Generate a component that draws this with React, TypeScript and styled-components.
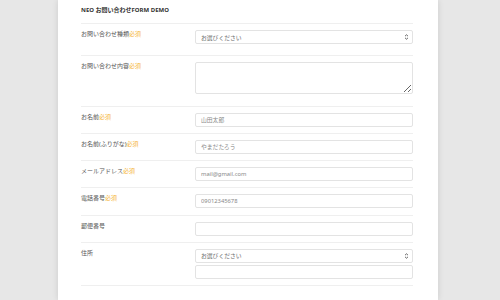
import styled, { createGlobalStyle } from "styled-components";

const GlobalStyle = createGlobalStyle`
  html, body {
    margin: 0;
    padding: 0;
    background: #e7e7e7;
    font-family: "Noto Sans", "Noto Sans CJK JP", sans-serif;
  }
`;

const Page = styled.div`
  height: 300px;
  overflow: hidden;
  padding-left: 58px;
`;

const Card = styled.div`
  width: 380px;
  min-height: 300px;
  box-sizing: border-box;
  background: #fff;
  box-shadow: 0 0 6px rgba(0, 0, 0, 0.12);
  padding: 6px 25px 0 23px;
`;

const Title = styled.h1`
  margin: 0;
  font-size: 6px;
  line-height: 9px;
  font-weight: 700;
  color: #333;
  padding-bottom: 8px;
  border-bottom: 1px solid #efefef;
`;

const Row = styled.div<{ $bottom?: number }>`
  display: grid;
  grid-template-columns: 114px 1fr;
  align-items: start;
  padding: 6px 0 ${(p) => p.$bottom ?? 6.3}px;
  border-bottom: 1px solid #efefef;
`;

const Label = styled.div`
  font-size: 6px;
  line-height: 8px;
  color: #555;
  white-space: nowrap;
`;

const Required = styled.span`
  color: #f5b335;
`;

const Fields = styled.div`
  display: flex;
  flex-direction: column;
  gap: 2px;
`;

const fieldBase = `
  box-sizing: border-box;
  width: 100%;
  margin: 0;
  border: 1px solid #e3e3e3;
  border-radius: 2px;
  background: #fff;
  font-family: "Noto Sans", "Noto Sans CJK JP", sans-serif;
  font-size: 5.8px;
  color: #555;
  padding: 0 5px;
  outline: none;
  &::placeholder {
    color: #888;
  }
`;

const Input = styled.input`
  ${fieldBase}
  display: block;
  height: 14px;
`;

const TextArea = styled.textarea`
  ${fieldBase}
  height: 32px;
  display: block;
  resize: vertical;
  padding: 3px 5px;
`;

const SelectBox = styled.div`
  ${fieldBase}
  display: flex;
  align-items: center;
  justify-content: space-between;
  height: 14px;
  padding: 0 3px 0 5px;
  color: #666;
  cursor: default;
`;

function Chooser() {
  return (
    <SelectBox role="combobox" aria-expanded="false">
      <span>お選びください</span>
      <svg width="5" height="6" viewBox="0 0 5 6">
        <path d="M1 2.2 L2.5 0.8 L4 2.2 M1 3.8 L2.5 5.2 L4 3.8" fill="none" stroke="#555" strokeWidth="0.9" />
      </svg>
    </SelectBox>
  );
}

function LabelText({ text, required }: { text: string; required?: boolean }) {
  return (
    <Label>
      {text}
      {required && <Required>必須</Required>}
    </Label>
  );
}

export default function App() {
  return (
    <>
      <GlobalStyle />
      <Page>
        <Card>
          <Title>NEO お問い合わせFORM DEMO</Title>
          <Row $bottom={11}>
            <LabelText text="お問い合わせ種類" required />
            <Chooser />
          </Row>
          <Row $bottom={11.5}>
            <LabelText text="お問い合わせ内容" required />
            <TextArea />
          </Row>
          <Row>
            <LabelText text="お名前" required />
            <Input placeholder="山田太郎" />
          </Row>
          <Row>
            <LabelText text="お名前(ふりがな)" required />
            <Input placeholder="やまだたろう" />
          </Row>
          <Row>
            <LabelText text="メールアドレス" required />
            <Input placeholder="mail@gmail.com" />
          </Row>
          <Row>
            <LabelText text="電話番号" required />
            <Input placeholder="09012345678" />
          </Row>
          <Row>
            <LabelText text="郵便番号" />
            <Input />
          </Row>
          <Row $bottom={6}>
            <LabelText text="住所" />
            <Fields>
              <Chooser />
              <Input />
            </Fields>
          </Row>
        </Card>
      </Page>
    </>
  );
}
